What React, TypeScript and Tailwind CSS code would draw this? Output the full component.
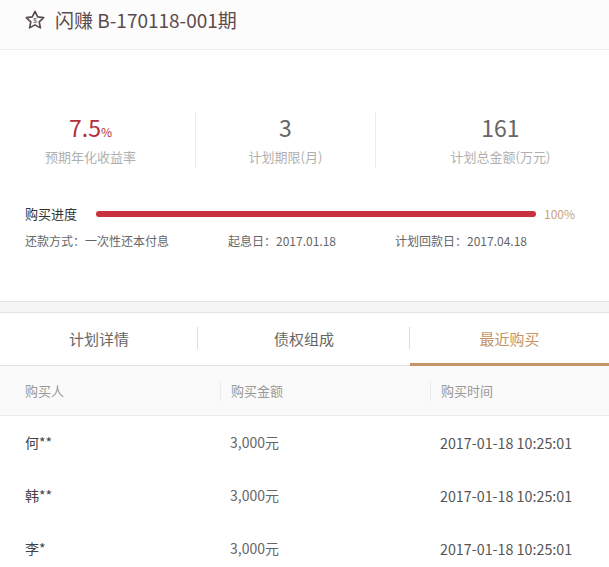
import React from "react";

const font = { fontFamily: '"Microsoft YaHei", "Noto Sans CJK SC", sans-serif' };

const buyers = [
  { name: "何**", amount: "3,000元", time: "2017-01-18 10:25:01" },
  { name: "韩**", amount: "3,000元", time: "2017-01-18 10:25:01" },
  { name: "李*", amount: "3,000元", time: "2017-01-18 10:25:01" },
];

const StarIcon = () => (
  <svg width="22" height="22" viewBox="0 0 24 24" fill="none">
    <path
      d="M12 2.5l2.9 6.1 6.6.8-4.9 4.6 1.3 6.6L12 17.3l-5.9 3.3 1.3-6.6-4.9-4.6 6.6-.8z"
      stroke="#5c4b4b"
      strokeWidth="1.8"
      strokeLinejoin="round"
    />
    <text x="12" y="15" textAnchor="middle" fontSize="7" fill="#5c4b4b" fontFamily="Liberation Sans, sans-serif">
      $
    </text>
  </svg>
);

export default function App() {
  return (
    <div className="w-[609px] h-[567px] bg-white overflow-hidden" style={font}>
      {/* title */}
      <div className="h-[50px] bg-[#fcfcfc] border-b border-[#ececec] flex items-start pt-[9px] pl-[24px] gap-[9px]">
        <StarIcon />
        <span className="text-[19px] leading-[22px] text-[#5c4b4b]">闪赚 B-170118-001期</span>
      </div>

      {/* stats */}
      <div className="flex pt-[62px] h-[154px]">
        <div className="w-[195px] pr-[14px] flex flex-col items-center">
          <div className="text-[23px] leading-[30px] text-[#b3303b]">
            7.5<span className="text-[12px] leading-none">%</span>
          </div>
          <div className="text-[13px] leading-[20px] text-[#b0b0b0] mt-[5px]">预期年化收益率</div>
        </div>
        <div className="w-[180px] border-l border-[#ececec] h-[56px] flex flex-col items-center">
          <div className="text-[23px] leading-[30px] text-[#666]">3</div>
          <div className="text-[13px] leading-[20px] text-[#b0b0b0] mt-[5px]">计划期限(月)</div>
        </div>
        <div className="flex-1 border-l border-[#ececec] h-[56px] pl-[16px] flex flex-col items-center">
          <div className="text-[23px] leading-[30px] text-[#666]">161</div>
          <div className="text-[13px] leading-[20px] text-[#b0b0b0] mt-[5px]">计划总金额(万元)</div>
        </div>
      </div>

      {/* progress */}
      <div className="px-[25px]">
        <div className="flex items-center h-[20px]">
          <span className="text-[13px] text-[#333] w-[71px]">购买进度</span>
          <div className="w-[440px] h-[6px] rounded-full bg-[#c9303e]" />
          <span className="text-[12px] text-[#c8a27a] ml-[8px]">100%</span>
        </div>
        <div className="flex items-center text-[12px] text-[#666] mt-[8px] h-[18px]">
          <span className="w-[203px]">还款方式：一次性还本付息</span>
          <span className="w-[167px]">起息日：2017.01.18</span>
          <span>计划回款日：2017.04.18</span>
        </div>
      </div>

      {/* band */}
      <div className="mt-[51px] h-[12px] bg-[#f5f5f5] border-y border-[#e4e4e4]" />

      {/* tabs */}
      <div className="flex h-[53px] border-b border-[#e0e0e0] text-[15px]">
        <div className="w-[198px] flex items-center justify-center text-[#666] relative">
          计划详情
          <span className="absolute right-0 top-[14px] h-[22px] border-r border-[#dcdcdc]" />
        </div>
        <div className="w-[212px] flex items-center justify-center text-[#666] relative">
          债权组成
          <span className="absolute right-0 top-[14px] h-[22px] border-r border-[#dcdcdc]" />
        </div>
        <div className="flex-1 flex items-center justify-center text-[#c49466] border-b-[3px] border-[#c49466] -mb-px pt-[2px]">
          最近购买
        </div>
      </div>

      {/* table header */}
      <div className="flex h-[50px] items-center bg-[#fafafa] border-b border-[#ececec] text-[13px] text-[#999]">
        <div className="w-[220px] pl-[25px]">购买人</div>
        <div className="w-[210px] pl-[10px] border-l border-[#ececec] leading-[20px]">购买金额</div>
        <div className="flex-1 pl-[10px] border-l border-[#ececec] leading-[20px]">购买时间</div>
      </div>

      {buyers.map((b, i) => (
        <div key={i} className="flex h-[53px] items-center text-[14px]">
          <div className="w-[220px] pl-[25px] text-[#444]">{b.name}</div>
          <div className="w-[210px] pl-[10px] text-[#666]">{b.amount}</div>
          <div className="flex-1 pl-[10px] text-[#555] text-[14.3px]">{b.time}</div>
        </div>
      ))}
    </div>
  );
}
